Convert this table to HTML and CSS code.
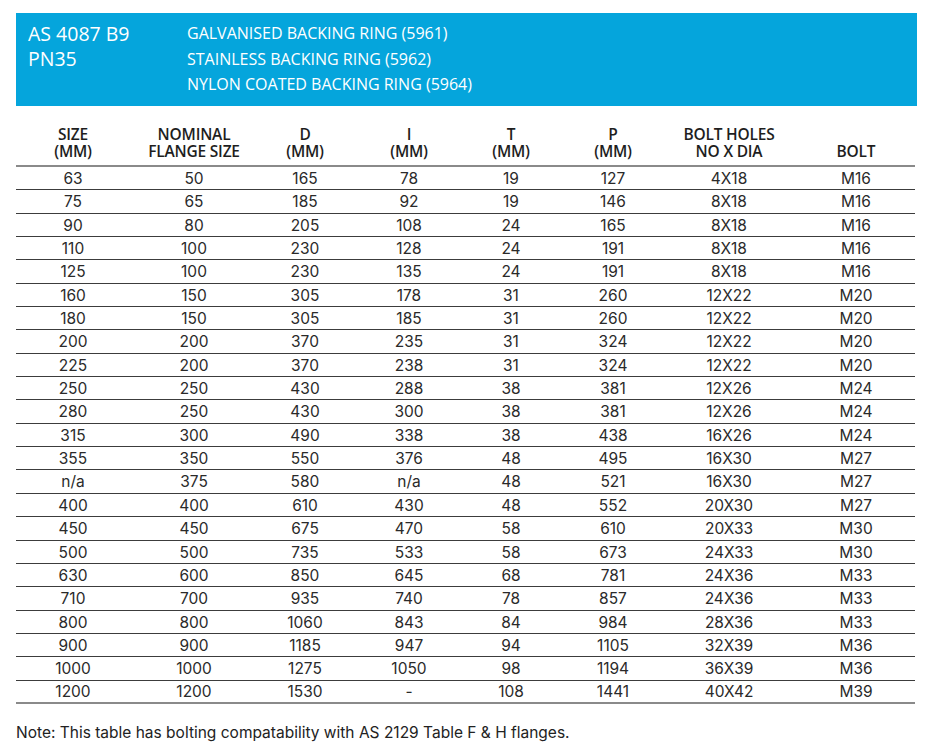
FILE: index.html
```html
<!DOCTYPE html>
<html lang="en">
<head>
<meta charset="utf-8">
<title>AS 4087 B9 PN35</title>
<link rel="stylesheet" href="styles.css">
</head>
<body>
<div class="page">
  <header class="banner">
    <div class="standard">
      <div>AS 4087 B9</div>
      <div>PN35</div>
    </div>
    <div class="products">
      <div>GALVANISED BACKING RING (5961)</div>
      <div>STAINLESS BACKING RING (5962)</div>
      <div>NYLON COATED BACKING RING (5964)</div>
    </div>
  </header>

  <table class="spec">
    <colgroup>
      <col class="c1"><col class="c2"><col class="c3"><col class="c4">
      <col class="c5"><col class="c6"><col class="c7"><col class="c8">
    </colgroup>
    <thead>
      <tr>
        <th>SIZE<br>(MM)</th>
        <th>NOMINAL<br>FLANGE SIZE</th>
        <th>D<br>(MM)</th>
        <th>I<br>(MM)</th>
        <th>T<br>(MM)</th>
        <th>P<br>(MM)</th>
        <th>BOLT HOLES<br>NO X DIA</th>
        <th class="last">BOLT</th>
      </tr>
    </thead>
    <tbody>
      <tr><td>63</td><td>50</td><td>165</td><td>78</td><td>19</td><td>127</td><td>4X18</td><td class="last">M16</td></tr>
      <tr><td>75</td><td>65</td><td>185</td><td>92</td><td>19</td><td>146</td><td>8X18</td><td class="last">M16</td></tr>
      <tr><td>90</td><td>80</td><td>205</td><td>108</td><td>24</td><td>165</td><td>8X18</td><td class="last">M16</td></tr>
      <tr><td>110</td><td>100</td><td>230</td><td>128</td><td>24</td><td>191</td><td>8X18</td><td class="last">M16</td></tr>
      <tr><td>125</td><td>100</td><td>230</td><td>135</td><td>24</td><td>191</td><td>8X18</td><td class="last">M16</td></tr>
      <tr><td>160</td><td>150</td><td>305</td><td>178</td><td>31</td><td>260</td><td>12X22</td><td class="last">M20</td></tr>
      <tr><td>180</td><td>150</td><td>305</td><td>185</td><td>31</td><td>260</td><td>12X22</td><td class="last">M20</td></tr>
      <tr><td>200</td><td>200</td><td>370</td><td>235</td><td>31</td><td>324</td><td>12X22</td><td class="last">M20</td></tr>
      <tr><td>225</td><td>200</td><td>370</td><td>238</td><td>31</td><td>324</td><td>12X22</td><td class="last">M20</td></tr>
      <tr><td>250</td><td>250</td><td>430</td><td>288</td><td>38</td><td>381</td><td>12X26</td><td class="last">M24</td></tr>
      <tr><td>280</td><td>250</td><td>430</td><td>300</td><td>38</td><td>381</td><td>12X26</td><td class="last">M24</td></tr>
      <tr><td>315</td><td>300</td><td>490</td><td>338</td><td>38</td><td>438</td><td>16X26</td><td class="last">M24</td></tr>
      <tr><td>355</td><td>350</td><td>550</td><td>376</td><td>48</td><td>495</td><td>16X30</td><td class="last">M27</td></tr>
      <tr><td>n/a</td><td>375</td><td>580</td><td>n/a</td><td>48</td><td>521</td><td>16X30</td><td class="last">M27</td></tr>
      <tr><td>400</td><td>400</td><td>610</td><td>430</td><td>48</td><td>552</td><td>20X30</td><td class="last">M27</td></tr>
      <tr><td>450</td><td>450</td><td>675</td><td>470</td><td>58</td><td>610</td><td>20X33</td><td class="last">M30</td></tr>
      <tr><td>500</td><td>500</td><td>735</td><td>533</td><td>58</td><td>673</td><td>24X33</td><td class="last">M30</td></tr>
      <tr><td>630</td><td>600</td><td>850</td><td>645</td><td>68</td><td>781</td><td>24X36</td><td class="last">M33</td></tr>
      <tr><td>710</td><td>700</td><td>935</td><td>740</td><td>78</td><td>857</td><td>24X36</td><td class="last">M33</td></tr>
      <tr><td>800</td><td>800</td><td>1060</td><td>843</td><td>84</td><td>984</td><td>28X36</td><td class="last">M33</td></tr>
      <tr><td>900</td><td>900</td><td>1185</td><td>947</td><td>94</td><td>1105</td><td>32X39</td><td class="last">M36</td></tr>
      <tr><td>1000</td><td>1000</td><td>1275</td><td>1050</td><td>98</td><td>1194</td><td>36X39</td><td class="last">M36</td></tr>
      <tr><td>1200</td><td>1200</td><td>1530</td><td>-</td><td>108</td><td>1441</td><td>40X42</td><td class="last">M39</td></tr>
    </tbody>
  </table>

  <p class="note">Note: This table has bolting compatability with AS 2129 Table F &amp; H flanges.</p>
</div>
</body>
</html>
```

FILE: styles.css
```css
* { box-sizing: border-box; }

html, body {
  margin: 0;
  background: #ffffff;
}

body {
  font-family: Inter, "Liberation Sans", sans-serif;
  color: #222222;
}

.page {
  padding: 13px 16px 0 16px;
}

.banner {
  width: 901px;
  height: 93px;
  background: #05a5dc;
  color: #ffffff;
  display: flex;
  padding: 8px 0 0 12px;
  font-family: "Open Sans", "Liberation Sans", sans-serif;
}

.standard {
  width: 159px;
  font-size: 19.5px;
  font-weight: 500;
  line-height: 25px;
}

.products {
  font-size: 16px;
  font-weight: 500;
  line-height: 25.5px;
  padding-top: 0;
}

.spec {
  width: 899px;
  margin-top: 20px;
  border-collapse: separate;
  border-spacing: 0;
  table-layout: fixed;
}

.c1 { width: 114px; }
.c2 { width: 128px; }
.c3 { width: 94px; }
.c4 { width: 114px; }
.c5 { width: 90px; }
.c6 { width: 114px; }
.c7 { width: 118px; }
.c8 { width: 127px; }

.spec th {
  font-family: "Open Sans", "Liberation Sans", sans-serif;
  font-weight: 600;
  font-size: 15.5px;
  line-height: 17px;
  letter-spacing: -0.2px;
  color: #1e1e1e;
  text-align: center;
  vertical-align: bottom;
  padding: 0 0 5px 0;
  border-bottom: 2px solid #8a8a8a;
}

.spec td {
  font-size: 15.5px;
  line-height: 21.35px;
  height: 23.35px;
  padding: 1px 0 0 0;
  text-align: center;
  color: #2a2a2a;
  border-bottom: 1px solid #3c3c3c;
}

.spec tbody tr:last-child td {
  border-bottom: 2px solid #8a8a8a;
  line-height: 20.35px;
}

.spec .last {
  padding-left: 9px;
}

.note {
  margin: 19px 0 0 0;
  font-size: 15.5px;
  color: #222222;
}
```
